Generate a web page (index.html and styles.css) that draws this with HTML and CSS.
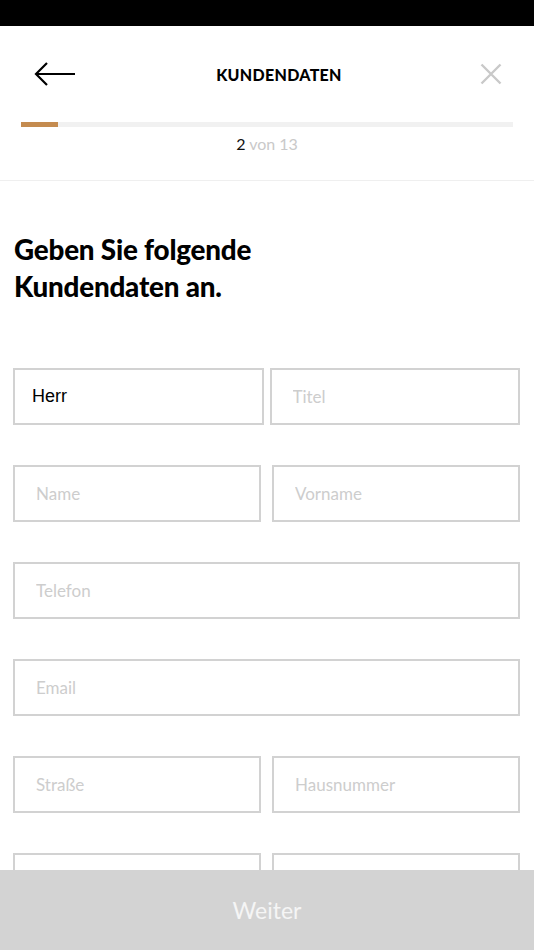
FILE: index.html
```html
<!DOCTYPE html>
<html lang="de">
<head>
<meta charset="utf-8">
<title>Kundendaten</title>
<link rel="stylesheet" href="styles.css">
</head>
<body>
<div class="app">
  <div class="statusbar"></div>
  <header class="header">
    <div class="topbar">
      <button class="icon-btn back" aria-label="Zurück">
        <svg width="42" height="26" viewBox="0 0 42 26"><path d="M2 13H41M13 2L2 13L13 24" fill="none" stroke="#000" stroke-width="2.2" stroke-linecap="butt" stroke-linejoin="miter"/></svg>
      </button>
      <h1 class="title">KUNDENDATEN</h1>
      <button class="icon-btn close" aria-label="Schließen">
        <svg width="22" height="22" viewBox="0 0 22 22"><path d="M1.5 1.5L20.5 20.5M20.5 1.5L1.5 20.5" fill="none" stroke="#c9c9c9" stroke-width="2.4"/></svg>
      </button>
    </div>
    <div class="progress"><div class="progress-fill" style="width:7.5%"></div></div>
    <div class="step"><span class="step-current">2</span> von 13</div>
  </header>
  <main class="content">
    <h2 class="heading">Geben Sie folgende<br>Kundendaten an.</h2>
    <form class="form">
      <div class="row row-tight">
        <div class="field select">Herr</div>
        <input class="field" placeholder="Titel">
      </div>
      <div class="row">
        <input class="field" placeholder="Name">
        <input class="field" placeholder="Vorname">
      </div>
      <div class="row row-single">
        <input class="field" placeholder="Telefon">
      </div>
      <div class="row row-single">
        <input class="field" placeholder="Email">
      </div>
      <div class="row">
        <input class="field" placeholder="Straße">
        <input class="field" placeholder="Hausnummer">
      </div>
      <div class="row">
        <input class="field" placeholder="PLZ">
        <input class="field" placeholder="Ort">
      </div>
    </form>
  </main>
  <button class="next">Weiter</button>
</div>
</body>
</html>
```

FILE: styles.css
```css
* { box-sizing: border-box; }
html, body { margin: 0; padding: 0; height: 100%; overflow: hidden; }
body {
  font-family: Lato, "Open Sans", sans-serif;
  color: #000;
  background: #fff;
}
.app {
  height: 100vh;
  display: flex;
  flex-direction: column;
}
.statusbar {
  height: 26px;
  background: #000;
  flex: none;
}
.header {
  flex: none;
  padding-top: 22px;
  border-bottom: 1px solid #efefef;
  padding-bottom: 27px;
}
.topbar {
  height: 52px;
  display: flex;
  align-items: center;
  justify-content: space-between;
  padding: 0 32px 0 34px;
}
.icon-btn {
  background: none;
  border: 0;
  padding: 0;
  display: flex;
  align-items: center;
  justify-content: center;
}
.back { width: 42px; height: 26px; }
.close { width: 22px; height: 22px; }
.title {
  margin: 0 0 0 2px;
  font-size: 16px;
  font-weight: 900;
  letter-spacing: 0.3px;
  font-family: Lato, "Open Sans", sans-serif;
}
.progress {
  margin: 22px 21px 0;
  height: 5px;
  background: #f1f1f1;
}
.progress-fill {
  height: 100%;
  background: #c48b4f;
}
.step {
  margin-top: 8px;
  line-height: 18px;
  text-align: center;
  font-size: 16px;
  color: #c9c9c9;
}
.step-current { color: #111; }
.content {
  flex: 1;
  overflow: hidden;
  padding: 50px 14px 0 13px;
}
.heading {
  margin: 0 0 63px 1px;
  font-size: 27.8px;
  line-height: 37px;
  font-weight: 900;
  letter-spacing: -0.2px;
}
.form {
  display: flex;
  flex-direction: column;
  gap: 40px;
}
.row {
  display: grid;
  grid-template-columns: 1fr 1fr;
  column-gap: 11px;
}
.row-tight { column-gap: 6px; }
.row-single { grid-template-columns: 1fr; }
.field {
  height: 57px;
  width: 100%;
  border: 2px solid #d2d2d2;
  border-radius: 0;
  background: #fff;
  padding: 0 0 0 21px;
  font-family: Lato, "Open Sans", sans-serif;
  font-size: 17px;
  color: #000;
  outline: none;
  margin: 0;
}
.field::placeholder { color: #cdcdcd; }
.select {
  display: flex;
  align-items: center;
  padding-left: 17px;
  font-family: "Liberation Sans", Arial, sans-serif;
  font-size: 18px;
}
.next {
  flex: none;
  height: 80px;
  border: 0;
  margin: 0;
  background: #d3d3d3;
  color: #f5f5f5;
  font-family: Lato, "Open Sans", sans-serif;
  font-size: 23px;
  width: 100%;
}
```
